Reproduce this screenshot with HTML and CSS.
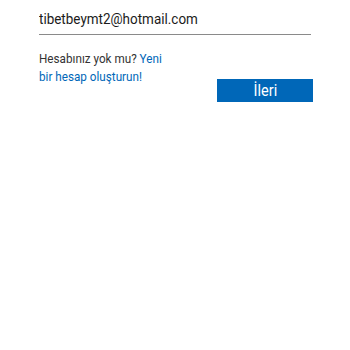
FILE: index.html
```html
<!DOCTYPE html>
<html lang="tr">
<head>
    <meta charset="UTF-8">
    <meta name="viewport" content="width=device-width, initial-scale=1.0">
    <title>Oturum aç</title>
    <link rel="stylesheet" href="styles.css">
</head>
<body>
    <div class="container">
        <div class="email"><span class="narrow">tibetbeymt2@hotmail.com</span></div>

        <div class="row">
            <p class="signup narrow">Hesabınız yok mu? <a href="#">Yeni bir hesap oluşturun!</a></p>
            <button class="next"><span class="narrow">İleri</span></button>
        </div>
    </div>
</body>
</html>
```

FILE: styles.css
```css
body {
    margin: 0;
    padding: 0;
    background-color: #ffffff;
    font-family: Roboto, "Noto Sans", sans-serif;
    color: #1b1b1b;
}

.container {
    padding: 9px 0 0 39px;
    width: 272px;
}

/* the screenshot's text is a little squeezed sideways */
.narrow {
    display: inline-block;
    transform: scaleX(0.88);
    transform-origin: left top;
}

.email {
    font-size: 15.3px;
    line-height: 20px;
    padding-bottom: 5px;
    border-bottom: 1px solid #8a8a8a;
}

.row {
    display: flex;
    justify-content: space-between;
    align-items: flex-start;
}

.signup {
    margin: 15px 0 0 0;
    width: 145px;
    flex-shrink: 0;
    font-size: 13.3px;
    line-height: 18px;
    color: #333333;
}

.signup a {
    color: #0067b8;
    text-decoration: none;
}

.next {
    margin-top: 44px;
    margin-right: -2px;
    width: 96px;
    height: 23px;
    border: none;
    background-color: #0067b8;
    color: #ffffff;
    font-family: Roboto, "Noto Sans", sans-serif;
    font-size: 16.5px;
    line-height: 23px;
    padding: 0;
}

.next .narrow {
    transform-origin: center top;
}
```
